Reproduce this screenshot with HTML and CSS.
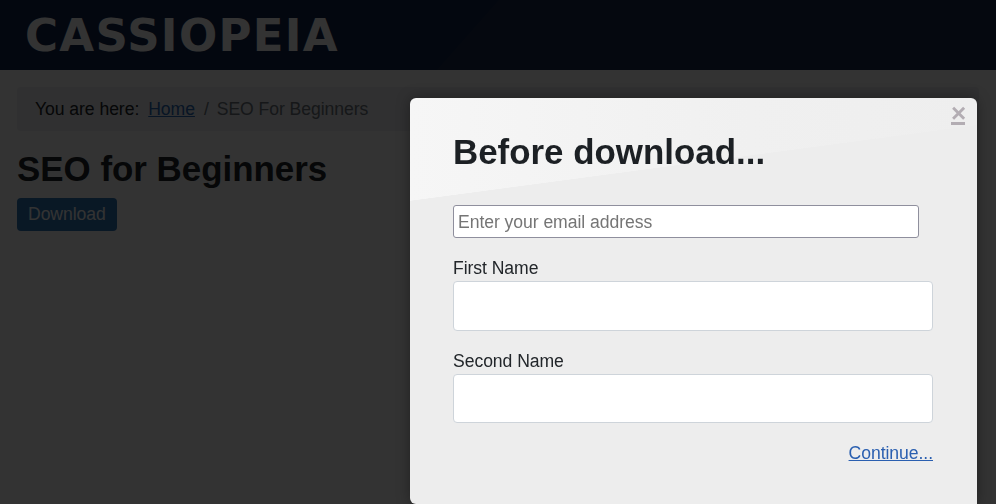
FILE: index.html
```html
<!DOCTYPE html>
<html lang="en">
<head>
    <meta charset="UTF-8">
    <meta name="viewport" content="width=device-width, initial-scale=1.0">
    <title>SEO for Beginners</title>
    <link rel="stylesheet" href="styles.css">
</head>
<body>
    <header class="site-header">
        <a class="brand" href="#">CASSIOPEIA</a>
    </header>

    <main class="site-main">
        <nav class="breadcrumb">
            <span class="here">You are here:</span>
            <a href="#">Home</a>
            <span class="sep">/</span>
            <span class="current">SEO For Beginners</span>
        </nav>
        <h1>SEO for Beginners</h1>
        <a class="btn-download" href="#">Download</a>
    </main>

    <!-- Popup over the dimmed page -->
    <div class="overlay"></div>
    <div class="modal">
        <button class="modal-close" type="button">×</button>
        <h2>Before download...</h2>
        <input class="email" type="text" placeholder="Enter your email address">
        <label for="first-name">First Name</label>
        <input class="field" id="first-name" type="text">
        <label for="second-name">Second Name</label>
        <input class="field field-second" id="second-name" type="text">
        <div class="modal-foot">
            <a href="#">Continue...</a>
        </div>
    </div>
</body>
</html>
```

FILE: styles.css
```css
* {
    box-sizing: border-box;
}
html, body {
    height: 100%;
}
body {
    margin: 0;
    overflow: hidden;
    background-color: #fff;
    color: #22262a;
    font-family: "Liberation Sans", Arial, sans-serif;
    font-size: 17.6px;
    letter-spacing: -0.06px;
    line-height: 27px;
}

/* Page under the overlay */
.site-header {
    height: 70px;
    padding: 0 25px;
    display: flex;
    align-items: center;
    background-image: linear-gradient(131.5deg, #10244c 0%, #10244c 47.1%, #1a2c4c 47.2%, #1a2c4c 100%);
}
.brand {
    color: #fff;
    font-family: "DejaVu Sans", sans-serif;
    font-size: 45px;
    font-weight: 700;
    letter-spacing: 1.3px;
    line-height: 1;
    text-decoration: none;
}
.site-main {
    padding: 17px 17px 0;
}
.breadcrumb {
    display: flex;
    height: 44px;
    padding: 0 18px;
    align-items: center;
    background-color: #eef0f2;
    border-radius: 4px;
}
.breadcrumb a {
    margin-left: 9px;
    color: #2a69b8;
}
.breadcrumb .sep {
    margin: 0 8px 0 9px;
    color: #6d757e;
}
.breadcrumb .current {
    color: #6d757e;
}
h1 {
    margin: 17px 0 9px;
    font-size: 34.9px;
    letter-spacing: 0;
    line-height: 41px;
    font-weight: 700;
}
.btn-download {
    display: inline-block;
    padding: 3px 11px;
    background-color: #2f77ba;
    border-radius: 4px;
    color: #fff;
    text-decoration: none;
}

/* Popup */
.overlay {
    position: fixed;
    inset: 0;
    background-color: rgba(0, 0, 0, 0.8);
}
.modal {
    position: absolute;
    top: 98px;
    left: 410px;
    width: 567px;
    height: 406px;
    padding: 34px 44px 0 43px;
    background-color: #ededed;
    background-image:
        linear-gradient(172.4deg, transparent 0%, transparent 21.3%, #ededed 21.4%),
        linear-gradient(90deg, #f6f6f6, #f0f0f0 60%, #eeeeee);
    border-radius: 6px 6px 0 6px;
    box-shadow: 0 0 14px rgba(0, 0, 0, 0.35);
}
.modal h2 {
    margin: 0 0 33px;
    color: #1c2024;
    font-size: 34.9px;
    letter-spacing: 0;
    line-height: 40px;
    font-weight: 700;
}
.modal-close {
    position: absolute;
    top: 4px;
    right: 12px;
    width: 14px;
    height: 23px;
    padding: 0;
    background: none;
    border: 0;
    border-bottom: 3px solid #b3adb3;
    color: #b3adb3;
    font-family: "Liberation Sans", Arial, sans-serif;
    font-size: 26px;
    font-weight: 700;
    line-height: 22px;
}
.email {
    display: block;
    width: 466px;
    height: 33px;
    padding: 1px 4px 0;
    background-color: #fff;
    border: 1px solid #8f8f9d;
    border-radius: 3px;
    font-family: inherit;
    font-size: 17.6px;
    letter-spacing: -0.06px;
}
.email::placeholder {
    color: #757575;
    opacity: 1;
}
label {
    display: block;
    margin-top: 17px;
    line-height: 26px;
    color: #22262a;
}
.field {
    display: block;
    width: 100%;
    height: 50px;
    background-color: #fff;
    border: 1px solid #ced4da;
    border-radius: 4px;
}
.field-second {
    height: 49px;
}
.modal-foot {
    margin-top: 17px;
    text-align: right;
}
.modal-foot a {
    color: #2a5fb0;
}
```
